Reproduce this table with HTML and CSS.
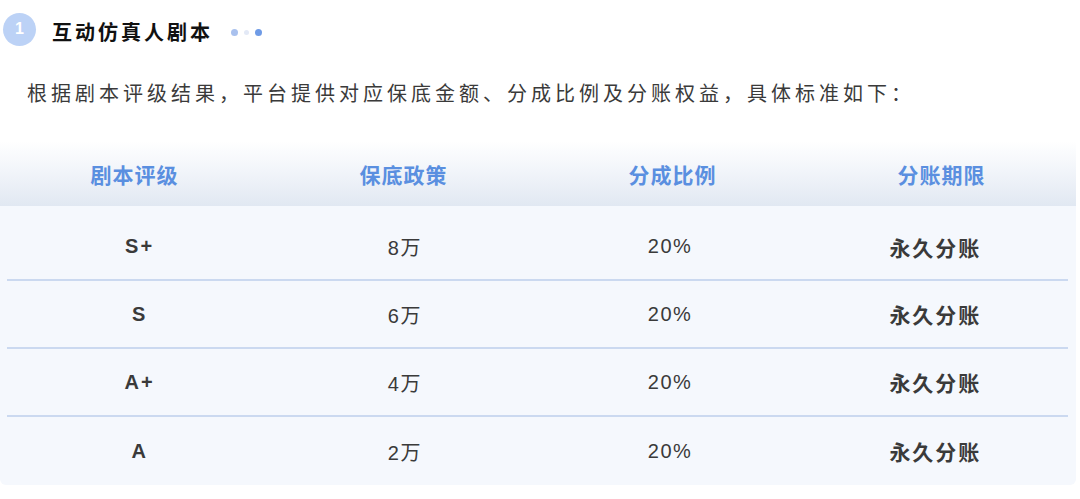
FILE: index.html
```html
<!DOCTYPE html>
<html lang="zh">
<head>
<meta charset="utf-8">
<link rel="stylesheet" href="styles.css">
</head>
<body>
<div class="page">
  <div class="section-title">
    <span class="badge">1</span>
    <span class="title-text">互动仿真人剧本</span>
    <span class="dots"><i class="d1"></i><i class="d2"></i><i class="d3"></i></span>
  </div>
  <p class="intro">根据剧本评级结果，平台提供对应保底金额、分成比例及分账权益，具体标准如下：</p>
  <div class="table">
    <div class="thead">
      <div class="th">剧本评级</div>
      <div class="th">保底政策</div>
      <div class="th">分成比例</div>
      <div class="th">分账期限</div>
    </div>
    <div class="row first">
      <div class="td grade">S+</div>
      <div class="td">8万</div>
      <div class="td">20%</div>
      <div class="td strong">永久分账</div>
    </div>
    <div class="row">
      <div class="td grade">S</div>
      <div class="td">6万</div>
      <div class="td">20%</div>
      <div class="td strong">永久分账</div>
    </div>
    <div class="row">
      <div class="td grade">A+</div>
      <div class="td">4万</div>
      <div class="td">20%</div>
      <div class="td strong">永久分账</div>
    </div>
    <div class="row last">
      <div class="td grade">A</div>
      <div class="td">2万</div>
      <div class="td">20%</div>
      <div class="td strong">永久分账</div>
    </div>
  </div>
</div>
</body>
</html>
```
FILE: styles.css
```css
* { box-sizing: border-box; }
html, body { margin: 0; padding: 0; background: #ffffff; }
body {
  font-family: "PingFang SC", "Noto Sans CJK SC", "Noto Sans", sans-serif;
  color: #333;
  width: 1080px;
  height: 499px;
  overflow: hidden;
}
.page { padding: 0; }
.section-title {
  display: flex;
  align-items: center;
  height: 34px;
  margin-top: 12px;
  padding-left: 3px;
}
.badge {
  width: 33px;
  height: 33px;
  border-radius: 50%;
  background: #bcd2f6;
  color: #fff;
  font-family: "Liberation Sans", Arial, sans-serif;
  font-size: 16px;
  font-weight: 700;
  display: flex;
  align-items: center;
  justify-content: center;
}
.title-text {
  margin-left: 16px;
  font-size: 20px;
  font-weight: 700;
  letter-spacing: 3px;
  color: #111;
  line-height: 1;
  margin-top: 6px;
}
.dots {
  display: flex;
  align-items: center;
  gap: 6px;
  margin-left: 18px;
  margin-top: 6px;
}
.dots i { display: block; border-radius: 50%; }
.dots .d1 { width: 7px; height: 7px; background: #a9c1ee; }
.dots .d2 { width: 5px; height: 5px; background: #e3e9f6; }
.dots .d3 { width: 7px; height: 7px; background: #6f9be6; }
.intro {
  margin: 0;
  padding: 33px 0 0 27px;
  font-size: 20px;
  letter-spacing: 4px;
  line-height: 28px;
  color: #3a3a3a;
  height: 95px;
}
.table {
  width: 1076px;
  background: #f5f8fd;
  border-radius: 0 0 6px 6px;
}
.thead {
  display: grid;
  grid-template-columns: repeat(4, 1fr);
  height: 65px;
  align-items: center;
  background: linear-gradient(to bottom, #ffffff 0%, #f2f5fa 45%, #e1e8f2 100%);
}
.th {
  text-align: center;
  font-size: 21px;
  font-weight: 700;
  color: #5a8fe0;
  letter-spacing: 1px;
}
.row {
  display: grid;
  grid-template-columns: repeat(4, 1fr);
  height: 68px;
  align-items: center;
  margin: 0 8px 0 7px;
  border-bottom: 2px solid #cbd9f0;
}
.row.first { height: 75px; padding-top: 8px; }
.row.last { border-bottom: none; }
.td {
  text-align: center;
  font-family: "Liberation Sans", "Noto Sans CJK SC", sans-serif;
  font-size: 20px;
  letter-spacing: 1.5px;
  color: #3a3a3a;
}
.td.grade { font-weight: 700; font-size: 20px; letter-spacing: 2px; }
.td.strong {
  font-family: "Noto Sans CJK SC", sans-serif;
  font-size: 21px;
  font-weight: 700;
  letter-spacing: 2px;
}
```
